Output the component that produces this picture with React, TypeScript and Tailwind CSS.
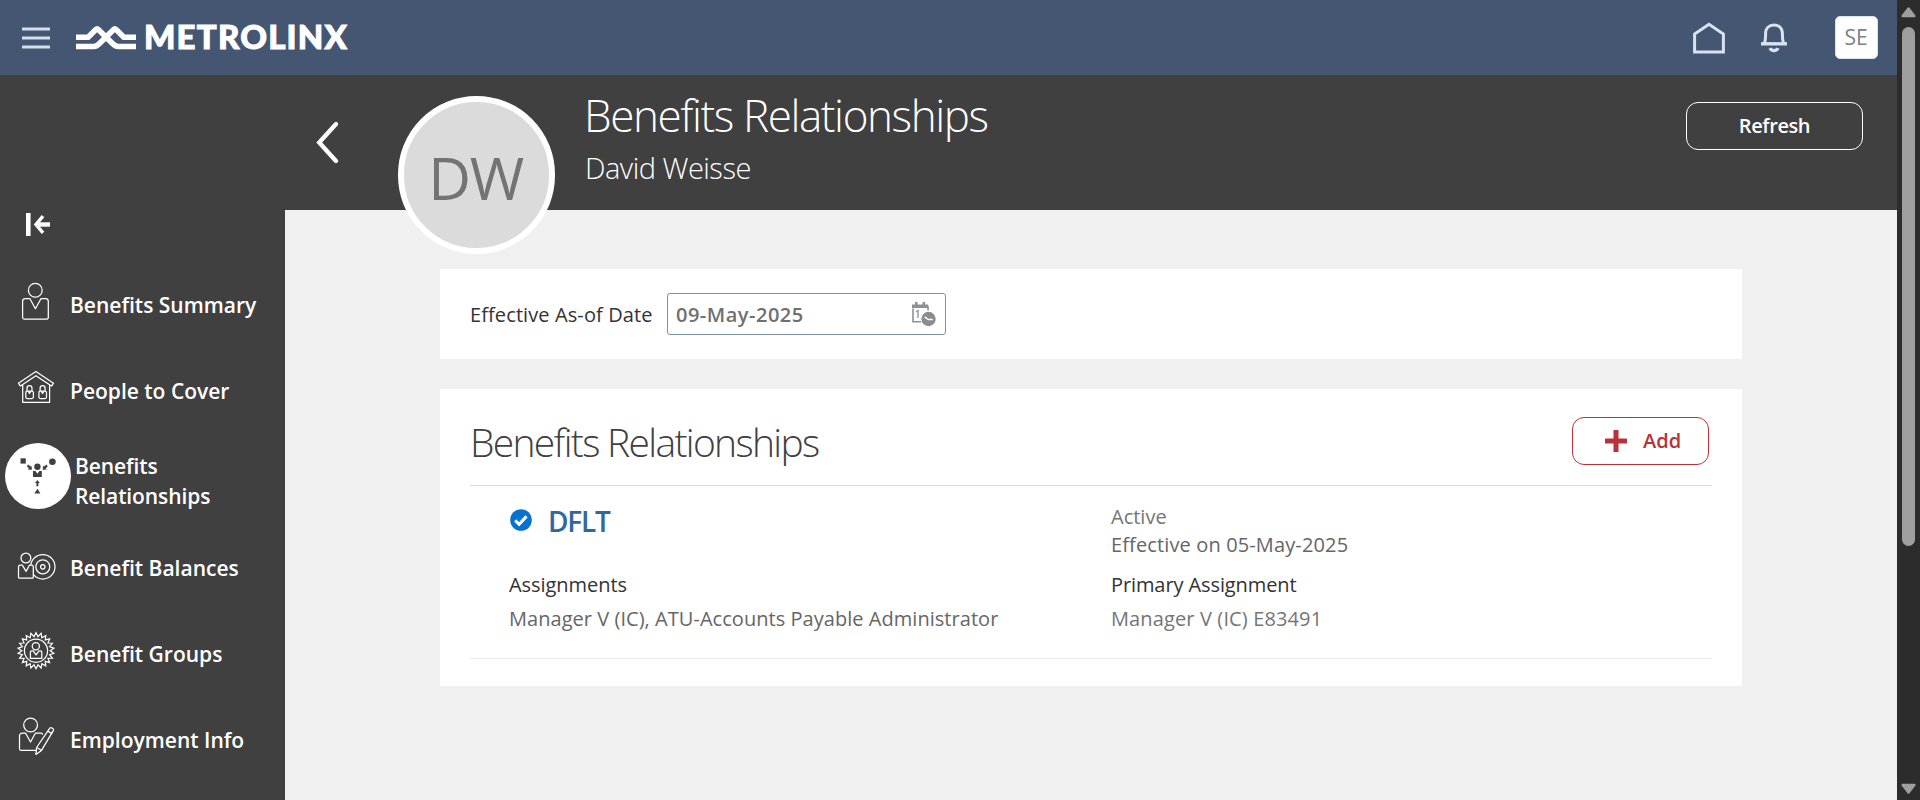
import type { ReactNode } from "react";

const burst = Array.from({ length: 44 }, (_, i) => {
  const r = i % 2 === 0 ? 18 : 14.2;
  const a = (i * Math.PI) / 22;
  return `${(36 + r * Math.sin(a)).toFixed(2)},${(650.7 - r * Math.cos(a)).toFixed(2)}`;
}).join(" ");

function NavIcon({ top, children }: { top: number; children: ReactNode }) {
  return (
    <svg
      width="70"
      height="86"
      viewBox={`0 ${top} 70 86`}
      className="shrink-0"
      fill="none"
      stroke="white"
      strokeWidth="1.25"
      strokeLinejoin="round"
      strokeLinecap="round"
    >
      {children}
    </svg>
  );
}

function NavItem({ label, icon }: { label: string; icon: ReactNode }) {
  return (
    <a className="flex h-[86px] items-center">
      {icon}
      <span className="whitespace-nowrap text-[21px] font-semibold leading-[30px]">{label}</span>
    </a>
  );
}

function Sidebar() {
  return (
    <nav className="flex w-[285px] shrink-0 flex-col overflow-hidden bg-[#404040] text-white">
      <div className="h-[187px] shrink-0 pl-[26px] pt-[138px]">
        <svg width="26" height="24" viewBox="0 0 26 24" fill="none" stroke="white">
          <path d="M2.3 0v23" strokeWidth="4.6" />
          <path d="M10 11.5h14" strokeWidth="4.4" />
          <path d="M17 3.2l-7 8.3 7 8.3" strokeWidth="3.4" />
        </svg>
      </div>
      <NavItem
        label="Benefits Summary"
        icon={
          <NavIcon top={262}>
            <circle cx="35.3" cy="290.2" r="6.9" />
            <path d="M29.8 298.5h-4.4a2.8 2.8 0 0 0-2.8 2.8v16.2a1.5 1.5 0 0 0 1.5 1.5h22.7a1.5 1.5 0 0 0 1.5-1.5v-16.2a2.8 2.8 0 0 0-2.8-2.8h-4.4l-5.7 10.3z" />
          </NavIcon>
        }
      />
      <NavItem
        label="People to Cover"
        icon={
          <NavIcon top={348}>
            <path d="M35.9 371.5l17.6 11.7-2 2.9-15.6-10.4-15.5 10.4-2-2.9zM22.7 385v17.3h26.9V385" />
            <path d="M26.8 391.2h5a1.6 1.6 0 0 1 1.6 1.6v4.2a1.6 1.6 0 0 1-1.6 1.6h-4.4a1.6 1.6 0 0 1-1.6-1.6v-4.2a1.6 1.6 0 0 1 1-1.6zM27 391v-2.800a2.500 2.500 0 0 1 5 0v2.800M28.300 391.500l1.200 2 1.200-2" />
            <path d="M39.900 391.200h5a1.600 1.600 0 0 1 1.600 1.600v4.200a1.600 1.600 0 0 1-1.600 1.600h-4.400a1.600 1.600 0 0 1-1.600-1.600v-4.200a1.600 1.600 0 0 1 1-1.600zM40.100 391v-2.800a2.500 2.500 0 0 1 5 0v2.800M41.400 391.500l1.200 2 1.200-2" />
          </NavIcon>
        }
      />
      <a className="flex h-[91px] items-center">
        <svg width="75" height="91" viewBox="0 434 75 91" className="shrink-0" fill="#404040">
          <circle cx="38" cy="476" r="33" fill="white" />
          <rect x="20.5" y="458.3" width="5.3" height="5.3" />
          <circle cx="52.4" cy="461.7" r="3.3" />
          <circle cx="37.4" cy="466.7" r="3.2" />
          <path d="M33 471h2.4l2 2.8 2-2.8h2.4v6H33zM37.4 488.7l3 4.7h-6z" />
          <path d="M26.8 466.2l1.6-1.6 2 2 1-.9.6 4-4.1-.3.9-1.2zM47.8 466.2l-1.6-1.6-2 2-1-.9-.6 4 4.1-.3-.9-1.2zM37.4 480l2.4 2.9h-1.4v3.3h-2v-3.3H35z" />
        </svg>
        <span className="w-[150px] pt-[2px] text-[21px] font-semibold leading-[30px] tracking-[-0.1px]">
          Benefits Relationships
        </span>
      </a>
      <NavItem
        label="Benefit Balances"
        icon={
          <NavIcon top={525}>
            <circle cx="42.8" cy="566.8" r="12.2" />
            <circle cx="42.8" cy="566.8" r="7" />
            <circle cx="42.8" cy="566.8" r="2.2" />
            <circle cx="25.9" cy="558" r="4.9" fill="#404040" />
            <path
              fill="#404040"
              d="M22.3 565.2h-2a1.8 1.8 0 0 0-1.8 1.8v10.2a1 1 0 0 0 1 1h12.8a1 1 0 0 0 1-1V567a1.8 1.8 0 0 0-1.8-1.8h-2.1l-3.3 6.2z"
            />
          </NavIcon>
        }
      />
      <NavItem
        label="Benefit Groups"
        icon={
          <NavIcon top={611}>
            <polygon points={burst} strokeLinejoin="miter" />
            <circle cx="36" cy="650.7" r="11.6" />
            <circle cx="35.8" cy="646.2" r="3.6" />
            <path d="M33.2 650.9h-1.5a1.3 1.3 0 0 0-1.3 1.3v6.2h11.4v-6.2a1.3 1.3 0 0 0-1.3-1.3H39l-2.9 4z" />
          </NavIcon>
        }
      />
      <NavItem
        label="Employment Info"
        icon={
          <NavIcon top={697}>
            <circle cx="30.6" cy="725" r="6.9" />
            <path d="M36.5 750.3H21a1.5 1.5 0 0 1-1.5-1.5v-13a2.8 2.8 0 0 1 2.8-2.8h3.2l5 9 5-9h5a2.8 2.8 0 0 1 2 1" />
            <path d="M49.8 728.2a1.6 1.6 0 0 1 2.1-.3l.9.6a1.6 1.6 0 0 1 .5 2.1L41.5 750.4l-5.6 4 .7-6.9zM48 731.2l3.800 2.400M36.700 747.500l4.600 2.700" />
          </NavIcon>
        }
      />
    </nav>
  );
}

function TopBar() {
  return (
    <header className="flex h-[75px] shrink-0 items-start bg-[#455672]">
      <svg width="360" height="75" viewBox="0 0 360 75" fill="none">
        <path d="M22 29h28M22 38h28M22 47h28" stroke="#d4deec" strokeWidth="3" />
        <g stroke="white" strokeWidth="5.6">
          <path d="M76 37.3h12.200l7.400-7.600q1.500-1.400 3 0l14.400 14.200q2.400 2.600 5.400 2.600h17.600" />
          <path d="M76 46.500h17.600q3 0 5.400-2.600l14.400-14.200q1.500-1.400 3 0l7.400 7.600h12.200" />
        </g>
        <text
          x="144"
          y="49"
          textLength="203"
          fill="white"
          stroke="white"
          strokeWidth="1"
          className="font-[Lato,sans-serif] text-[33px] font-black"
        >
          METROLINX
        </text>
      </svg>
      <svg width="100" height="75" viewBox="1690 0 100 75" fill="none" stroke="#d9e2ef" className="ml-auto">
        <path d="M1694.6 34L1709 24.2l14.4 9.8v18h-28.8z" strokeWidth="3" />
        <path d="M1761 43.8h26" strokeWidth="3.4" />
        <path d="M1764.3 43.5c1.3-3 1.3-5.5 1.3-9.7 0-5.8 3.4-8.7 8.4-8.7s8.4 2.9 8.4 8.7c0 4.2 0 6.7 1.3 9.7" strokeWidth="3" />
        <path d="M1770 48.2c1.3 3.2 6.7 3.2 8 0" strokeWidth="3.2" />
      </svg>
      <div className="ml-[45px] mr-[19px] mt-4 flex size-[43px] items-center justify-center rounded-[5px] border border-[#d9e2ef] bg-white pr-px text-[21px] text-[#808080]">
        SE
      </div>
    </header>
  );
}

function PageHeader() {
  return (
    <div className="flex h-[135px] shrink-0 bg-[#404040] text-white">
      <svg width="24" height="43" viewBox="0 0 24 43" fill="none" className="ml-[31px] mt-[46px]">
        <path d="M20 3L3.2 21.5 20 40" stroke="white" strokeWidth="4.300" strokeLinecap="round" />
      </svg>
      <div className="relative z-10 ml-[58px] mt-[21px] flex h-[158px] w-[157px] shrink-0 items-center justify-center rounded-full border-[6px] border-white bg-[#dbdbdb] pr-[2px] pt-[5px] text-[59px] tracking-[-1.5px] text-[#737373]">
        DW
      </div>
      <div className="ml-[29px] flex flex-col whitespace-nowrap pt-[15px] font-light">
        <h1 className="text-[44px] leading-[50px] tracking-[-1.42px]">Benefits Relationships</h1>
        <p className="ml-[1px] mt-[10px] text-[29px] leading-[36px] tracking-[-0.5px]">David Weisse</p>
      </div>
      <button className="ml-auto mr-[34px] mt-[27px] h-[48px] w-[177px] rounded-[12px] border border-white pb-px text-[20px] font-semibold tracking-[-0.4px]">
        Refresh
      </button>
    </div>
  );
}

function DateCard() {
  return (
    <section className="flex h-[90px] items-center bg-white pl-[30px] text-[20px]">
      <label className="w-[197px] whitespace-nowrap pt-px tracking-[0.1px] text-[#333]">Effective As-of Date</label>
      <div className="flex h-[42px] w-[279px] items-center justify-between rounded-[3px] border border-[#7d919e] pl-2 pr-[9px] font-semibold tracking-[0.5px] text-[#707070]">
        <span className="pt-px">09-May-2025</span>
        <svg width="24" height="25" viewBox="0 0 24 25" fill="none">
          <path d="M1 6.5v13.300h8M1 4.5h15v4" stroke="#8b9194" strokeWidth="1.600" />
          <path d="M0 2.500h16v3.500H0zM3 0h2.600v5H3zM10.500 0h2.600v5h-2.600z" fill="#8b9194" />
          <path d="M4 9.800l2-1.200v7.400" stroke="#9a9fa2" strokeWidth="1.500" />
          <circle cx="16.500" cy="17" r="7.800" fill="white" />
          <circle cx="16.500" cy="17" r="7.200" fill="#888d90" />
          <path d="M12.600 14.800l3.900 2.700h4.200" stroke="white" strokeWidth="1.500" />
        </svg>
      </div>
    </section>
  );
}

function RelationshipsCard() {
  return (
    <section className="mt-[30px] flex h-[297px] flex-col bg-white pl-[30px] pr-[30px] text-[20px]">
      <div className="flex h-[97px] shrink-0 items-start justify-between border-b border-[#d5dfe6]">
        <h2 className="mt-[27px] whitespace-nowrap text-[39px] font-light leading-[52px] tracking-[-1.68px] text-[#404040]">
          Benefits Relationships
        </h2>
        <button className="mr-[3px] mt-[28px] flex h-[48px] w-[137px] items-center rounded-[12px] border border-[#b83339] pb-px pl-[32px] font-semibold text-[#b83339]">
          <svg width="22" height="22" viewBox="0 0 22 22" fill="none" stroke="#b83339" strokeWidth="5">
            <path d="M0 11h22M11 0v22" />
          </svg>
          <span className="ml-4">Add</span>
        </button>
      </div>
      <div className="grid h-[173px] shrink-0 grid-cols-[602px_1fr] border-b border-[#ececec] pl-[39px] text-[#666]">
        <div className="flex flex-col">
          <div className="flex h-[70px] items-center">
            <svg width="22" height="22" viewBox="0 0 22 22" fill="none" className="mb-[2px] ml-px">
              <circle cx="11" cy="11" r="10.8" fill="#0572ce" />
              <path d="M5.2 11.4l3.9 3.9 7.4-7.9" stroke="white" strokeWidth="3" />
            </svg>
            <span className="ml-[16px] text-[28px] font-semibold leading-[36px] tracking-[-1.2px] text-[#33679c]">DFLT</span>
          </div>
          <div className="mt-[14px] leading-[30px] tracking-[-0.05px] text-[#333]">Assignments</div>
          <div className="mt-[4px] whitespace-nowrap leading-[30px] tracking-[0.04px]">
            Manager V (IC), ATU-Accounts Payable Administrator
          </div>
        </div>
        <div className="flex flex-col pt-[17px]">
          <div className="leading-[28px] text-[#757575]">Active</div>
          <div className="leading-[28px] tracking-[0.13px]">Effective on 05-May-2025</div>
          <div className="mt-[11px] leading-[30px] tracking-[-0.1px] text-[#333]">Primary Assignment</div>
          <div className="mt-[4px] leading-[30px] tracking-[0.13px] text-[#757575]">Manager V (IC) E83491</div>
        </div>
      </div>
    </section>
  );
}

function Scrollbar() {
  return (
    <div className="flex w-[23px] shrink-0 flex-col items-center bg-[#2c2c2c]">
      <svg width="15" height="27" viewBox="0 0 15 27" className="shrink-0">
        <path d="M7.5 8.5L13.3 16H1.7z" fill="#9f9f9f" stroke="#9f9f9f" strokeWidth="2.5" strokeLinejoin="round" />
      </svg>
      <div className="h-[519px] w-[13px] rounded-full bg-[#9f9f9f]" />
      <svg width="15" height="17" viewBox="0 0 15 17" className="mt-auto">
        <path d="M7.5 9.5L13.3 2H1.7z" fill="#9f9f9f" stroke="#9f9f9f" strokeWidth="2.5" strokeLinejoin="round" />
      </svg>
    </div>
  );
}

export default function App() {
  return (
    <div className="flex h-[800px] w-full overflow-hidden bg-[#f0f0f0] font-['Open_Sans','Noto_Sans',sans-serif]">
      <div className="flex min-w-0 flex-1 flex-col">
        <TopBar />
        <div className="flex min-h-0 flex-1">
          <Sidebar />
          <main className="flex min-w-0 flex-1 flex-col">
            <PageHeader />
            <div className="pl-[155px] pr-[155px] pt-[59px]">
              <DateCard />
              <RelationshipsCard />
            </div>
          </main>
        </div>
      </div>
      <Scrollbar />
    </div>
  );
}
